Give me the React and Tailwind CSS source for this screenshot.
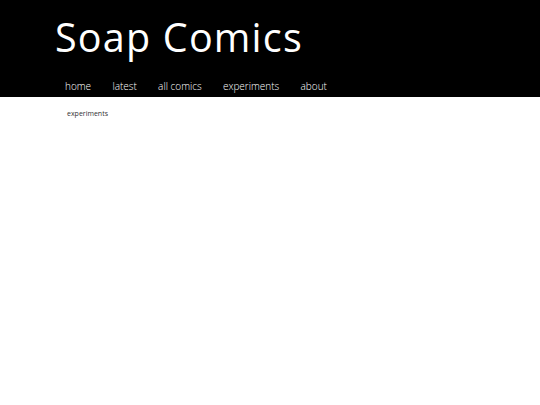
import React from "react";

export default function App() {
  const links = ["home", "latest", "all comics", "experiments", "about"];
  return (
    <div className="min-h-screen bg-white" style={{ fontFamily: '"Open Sans", sans-serif' }}>
      <header className="bg-black text-white h-[97px] pl-[55px]">
        <h1 className="text-[39.5px] font-medium tracking-[1.2px] leading-none pt-[18px]">Soap Comics</h1>
        <nav className="flex pt-[23px] pl-[10px] gap-[21.3px] text-[10px] font-light leading-none">
          {links.map((l) => (
            <a key={l} href="#" className="text-white">
              {l}
            </a>
          ))}
        </nav>
      </header>
      <div className="pl-[67px] pt-[13px] text-[7px] text-[#333] leading-none">experiments</div>
    </div>
  );
}
